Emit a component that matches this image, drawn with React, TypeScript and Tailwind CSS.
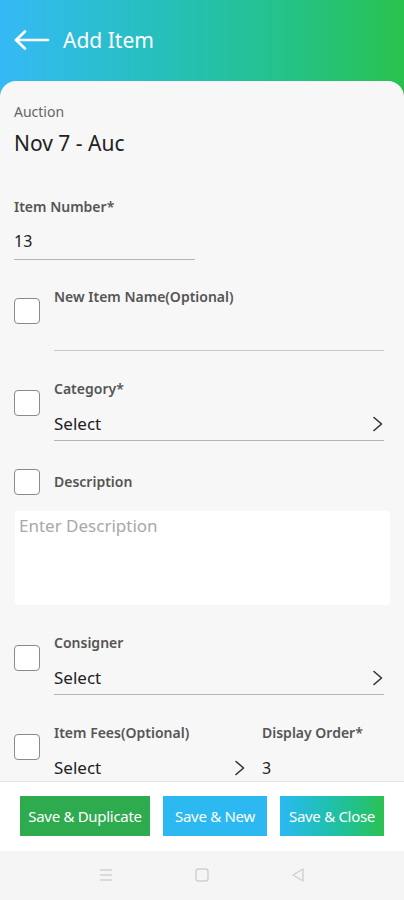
import React from "react";

const font = { fontFamily: '"Noto Sans", "Open Sans", sans-serif' };

function Box() {
  return <div className="w-[26px] h-[26px] shrink-0 rounded-[4px] border-[1.5px] border-[#8a8a8a] bg-white" />;
}

function Chevron() {
  return (
    <svg width="12" height="16" viewBox="0 0 12 16" fill="none">
      <polyline points="2,1.5 9.5,8 2,14.5" stroke="#333" strokeWidth="1.6" strokeLinecap="round" strokeLinejoin="round" />
    </svg>
  );
}

export default function App() {
  return (
    <div className="w-[404px] h-[900px] flex flex-col overflow-hidden bg-gradient-to-r from-[#35b9f6] to-[#2ac24c]" style={font}>
      <div className="h-[81px] shrink-0 flex items-center pl-[14px] pb-[1px]">
        <svg width="36" height="20" viewBox="0 0 36 20" fill="none">
          <line x1="2" y1="10" x2="34" y2="10" stroke="white" strokeWidth="2.6" strokeLinecap="round" />
          <polyline points="11,1.5 2,10 11,18.5" stroke="white" strokeWidth="2.6" strokeLinecap="round" strokeLinejoin="round" />
        </svg>
        <span className="ml-[13px] text-white text-[21px] leading-[28px]">Add Item</span>
      </div>
      <div className="flex-1 flex flex-col rounded-t-[16px] overflow-hidden bg-[#f7f7f7]">
        <div className="h-[700px] shrink-0 overflow-hidden pl-[14px] pr-[20px]">
          <div className="mt-[21px] text-[14px] leading-[20px] text-[#666]">Auction</div>
          <div className="mt-[6px] text-[21px] leading-[30px] text-[#222]">Nov 7 - Auc</div>
          <div className="mt-[39px] text-[14px] leading-[20px] font-semibold text-[#555]">Item Number*</div>
          <div className="w-[181px] border-b-[1.5px] border-[#b5b5b5]">
            <div className="mt-[13px] mb-[7px] text-[16px] leading-[22px] text-[#222]">13</div>
          </div>

          {/* New Item Name */}
          <div className="mt-[27px] flex gap-[14px]">
            <div className="pt-[11px]"><Box /></div>
            <div className="flex-1">
              <div className="text-[14px] leading-[20px] font-semibold text-[#555]">New Item Name(Optional)</div>
              <div className="h-[44px] border-b-[1.5px] border-[#c8c8c8]" />
            </div>
          </div>

          {/* Category */}
          <div className="mt-[28px] flex gap-[14px]">
            <div className="pt-[11px]"><Box /></div>
            <div className="flex-1">
              <div className="text-[14px] leading-[20px] font-semibold text-[#555]">Category*</div>
              <div className="mt-[13px] pb-[4px] flex items-center justify-between border-b-[1.5px] border-[#b5b5b5]">
                <span className="text-[17px] leading-[24px] text-[#222]">Select</span>
                <Chevron />
              </div>
            </div>
          </div>

          {/* Description */}
          <div className="mt-[28px] flex items-center gap-[14px]">
            <Box />
            <div className="text-[14px] leading-[20px] font-semibold text-[#555]">Description</div>
          </div>
          <div className="mt-[16px] ml-[1px] w-[375px] h-[94px] bg-white rounded-[3px] pl-[4px] pt-[3px] text-[17px] leading-[24px] text-[#a8a8a8]">
            Enter Description
          </div>

          {/* Consigner */}
          <div className="mt-[28px] flex gap-[14px]">
            <div className="pt-[12px]"><Box /></div>
            <div className="flex-1">
              <div className="text-[14px] leading-[20px] font-semibold text-[#555]">Consigner</div>
              <div className="mt-[13px] pb-[4px] flex items-center justify-between border-b-[1.5px] border-[#b5b5b5]">
                <span className="text-[17px] leading-[24px] text-[#222]">Select</span>
                <Chevron />
              </div>
            </div>
          </div>

          {/* Item Fees / Display Order */}
          <div className="mt-[28px] flex gap-[14px]">
            <div className="pt-[11px]"><Box /></div>
            <div className="w-[192px]">
              <div className="text-[14px] leading-[20px] font-semibold text-[#555]">Item Fees(Optional)</div>
              <div className="mt-[13px] flex items-center justify-between">
                <span className="text-[17px] leading-[24px] text-[#222]">Select</span>
                <Chevron />
              </div>
            </div>
            <div className="ml-[2px]">
              <div className="text-[14px] leading-[20px] font-semibold text-[#555]">Display Order*</div>
              <div className="mt-[13px] text-[16px] leading-[24px] text-[#222]">3</div>
            </div>
          </div>
        </div>
        <div className="h-[70px] shrink-0 bg-white border-t-[1.5px] border-[#e2e2e2] flex items-center pl-[20px] gap-[13px] pb-[1px]">
          <div className="w-[130px] h-[40px] bg-[#2eaa4f] flex items-center justify-center text-white text-[15px] leading-[20px] tracking-[-0.3px]">Save &amp; Duplicate</div>
          <div className="w-[104px] h-[40px] bg-[#2cb9f2] flex items-center justify-center text-white text-[15px] leading-[20px] tracking-[-0.3px]">Save &amp; New</div>
          <div className="w-[104px] h-[40px] bg-gradient-to-r from-[#2cb9f2] to-[#2bc14f] flex items-center justify-center text-white text-[15px] leading-[20px] tracking-[-0.3px]">Save &amp; Close</div>
        </div>
        <div className="flex-1 bg-[#f5f5f5] flex items-center justify-center gap-[80px] pb-[1px]">
          <svg width="16" height="14" viewBox="0 0 16 14" fill="none">
            <line x1="2" y1="2" x2="14" y2="2" stroke="#cfcfcf" strokeWidth="1.4" />
            <line x1="2" y1="7" x2="14" y2="7" stroke="#cfcfcf" strokeWidth="1.4" />
            <line x1="2" y1="12" x2="14" y2="12" stroke="#cfcfcf" strokeWidth="1.4" />
          </svg>
          <svg width="16" height="16" viewBox="0 0 16 16" fill="none">
            <rect x="2" y="2" width="12" height="12" rx="2.5" stroke="#cfcfcf" strokeWidth="1.4" />
          </svg>
          <svg width="16" height="16" viewBox="0 0 16 16" fill="none">
            <polygon points="13,2 13,14 3,8" stroke="#cfcfcf" strokeWidth="1.4" strokeLinejoin="round" />
          </svg>
        </div>
      </div>
    </div>
  );
}
